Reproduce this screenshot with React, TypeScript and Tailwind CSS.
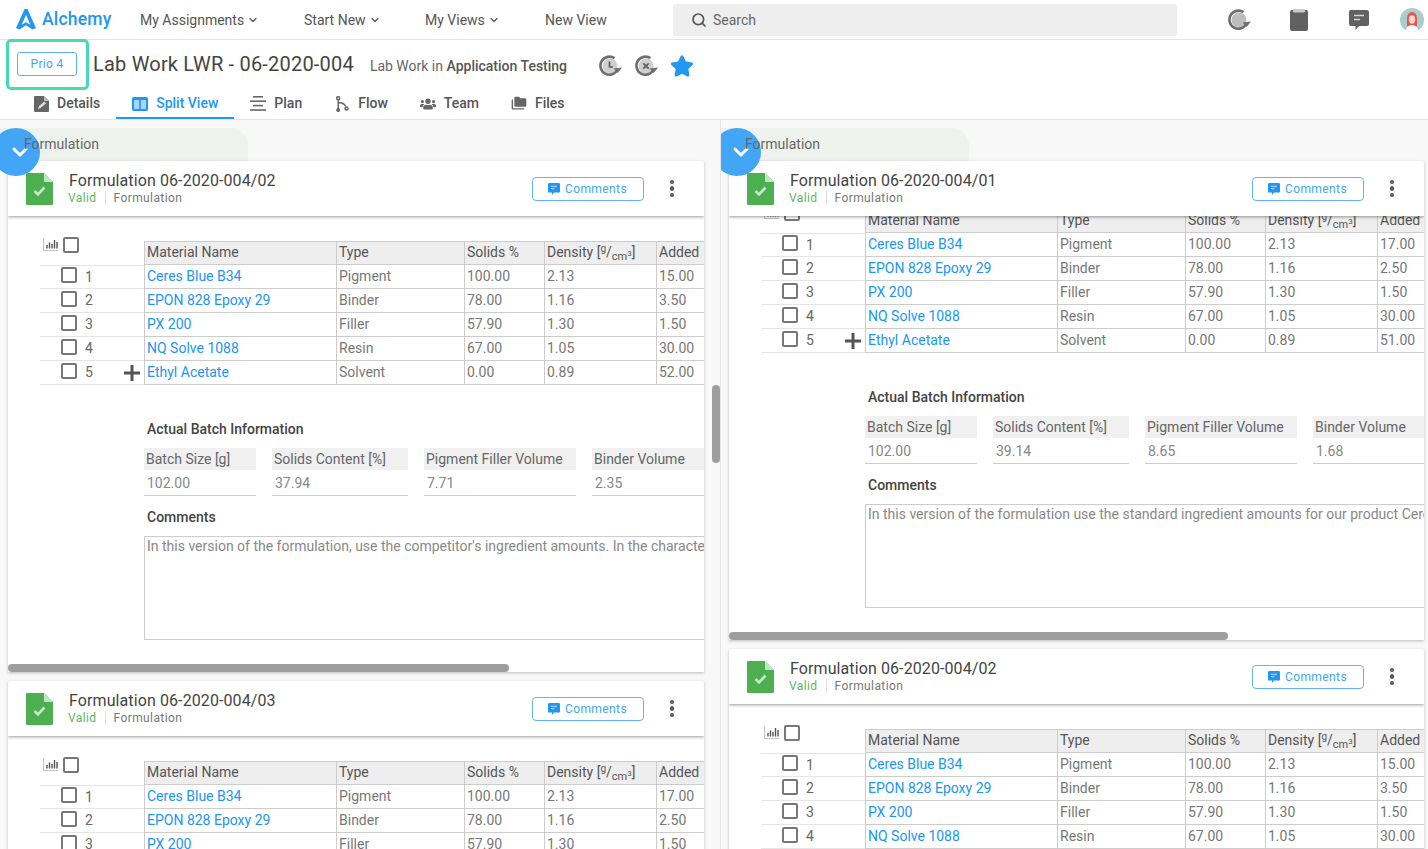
import React from "react";
import { ChevronDown, Search } from "lucide-react";
import { FaUsers, FaStar } from "react-icons/fa";
import { MdFolderCopy } from "react-icons/md";

type Row = [string, string, string, string, string];

const LINK = "text-[#2196f3]";

function Logo() {
  return (
    <svg className="-translate-y-px" width="20" height="21" viewBox="0 0 21 22" fill="#2196f3">
      <path d="M9 0 L12 0 L21 20 L17.5 21.5 L10.5 17 L3.5 21.5 L0 20 Z M10.5 6 L6 16.5 L10.5 14 L15 16.5 Z" fillRule="evenodd" />
    </svg>
  );
}

function HistoryIcon({ kind, size = 24 }: { kind: "clock" | "x" | "none"; size?: number }) {
  return (
    <svg width={size} height={size} viewBox="0 0 24 24">
      <circle cx="11" cy="12" r="7.5" fill={kind === "none" ? "#bdbdbd" : "#cfcfcf"} />
      <path d="M18.6 15.5 A9 9 0 1 1 15.5 4.2" fill="none" stroke="#6e6e6e" strokeWidth="2.6" />
      <path d="M23 13.5 L18.6 19 L14.6 14.6 Z" fill="#6e6e6e" />
      {kind === "clock" && <path d="M10.5 7.5 V13 H14" fill="none" stroke="#5f5f5f" strokeWidth="1.7" />}
      {kind === "x" && <path d="M8.3 9.3 L13.7 14.7 M13.7 9.3 L8.3 14.7" fill="none" stroke="#5f5f5f" strokeWidth="1.7" />}
    </svg>
  );
}

function Clipboard() {
  return (
    <svg width="18" height="22" viewBox="0 0 18 22">
      <rect x="0" y="1" width="18" height="21" rx="2" fill="#616161" />
      <rect x="3" y="0" width="12" height="3.5" rx="1" fill="#c9c9c9" />
    </svg>
  );
}

function Chat({ color = "#616161", size = 20 }: { color?: string; size?: number }) {
  return (
    <svg width={size} height={size} viewBox="0 0 20 20">
      <path d="M2 0 H18 A2 2 0 0 1 20 2 V14 A2 2 0 0 1 18 16 H10 L6.5 20 V16 H2 A2 2 0 0 1 0 14 V2 A2 2 0 0 1 2 0 Z" fill={color} />
      <path d="M5 5.5 H15 M5 9.5 H11" stroke="#fff" strokeOpacity="0.75" strokeWidth="1.5" />
    </svg>
  );
}

function Avatar() {
  return (
    <svg width="24" height="24" viewBox="0 0 24 24">
      <clipPath id="avatar-clip"><circle cx="12" cy="12" r="12" /></clipPath>
      <g clipPath="url(#avatar-clip)">
        <rect width="24" height="24" fill="#a8cfcd" />
        <path d="M7 18 V10 A5 6 0 0 1 17 10 V18 Z" fill="#e8554f" />
        <ellipse cx="12" cy="11.5" rx="3.2" ry="4.2" fill="#f7d3cb" />
        <path d="M5 25 Q6 17 12 17 Q18 17 19 25 Z" fill="#fafafa" />
      </g>
    </svg>
  );
}

function DetailsIcon() {
  return (
    <svg width="15" height="16" viewBox="0 0 15 16">
      <path d="M0 1 A1 1 0 0 1 1 0 H10 L15 5 V15 A1 1 0 0 1 14 16 H1 A1 1 0 0 1 0 15 Z" fill="#666" />
      <path d="M10 0 L15 5 H10 Z" fill="#bbb" />
      <path d="M4 13 L5 10 L10.5 5.5 L12 7.5 L6.5 12 Z" fill="#ddd" />
    </svg>
  );
}

function SplitIcon() {
  return (
    <svg width="16" height="14" viewBox="0 0 16 14">
      <rect width="16" height="14" rx="2" fill="#2196f3" />
      <rect x="2" y="3" width="5.2" height="9" fill="#a8d6fb" />
      <rect x="8.8" y="3" width="5.2" height="9" fill="#a8d6fb" />
    </svg>
  );
}

function PlanIcon() {
  return (
    <svg width="16" height="15" viewBox="0 0 16 15" fill="#666">
      <rect x="3" y="0" width="10" height="1.6" />
      <rect x="0" y="4.4" width="16" height="1.6" />
      <rect x="3" y="8.8" width="10" height="1.6" />
      <rect x="0" y="13.2" width="16" height="1.6" />
    </svg>
  );
}

function FlowIcon() {
  return (
    <svg width="13" height="16" viewBox="0 0 13 16" fill="none" stroke="#666" strokeWidth="1.5">
      <circle cx="2.2" cy="2.2" r="1.5" />
      <path d="M2.2 4 V13 M2.2 6.5 Q8 6.5 9.8 10.5" />
      <circle cx="2.2" cy="14" r="1.3" fill="#666" />
      <circle cx="10.5" cy="12.5" r="1.5" />
    </svg>
  );
}

function Tab({ icon, label, active }: { icon: React.ReactNode; label: string; active?: boolean }) {
  return (
    <div
      className={
        "flex h-[29px] items-center gap-2 px-4 border-b-2 font-medium " +
        (active ? "border-[#2196f3] text-[#2196f3]" : "border-transparent text-[#555]")
      }
    >
      <span className="flex w-4 justify-center">{icon}</span>
      <span>{label}</span>
    </div>
  );
}

function DocIcon() {
  return (
    <svg width="27" height="32" viewBox="0 0 27 32">
      <path d="M1 0 H18 L27 9 V31 A1 1 0 0 1 26 32 H1 A1 1 0 0 1 0 31 V1 A1 1 0 0 1 1 0 Z" fill="#4caf50" />
      <path d="M18 0 L27 9 H18 Z" fill="#c4e4c6" />
      <path d="M8.5 18 L12 21.5 L18.5 14.5" fill="none" stroke="#c9e6cb" strokeWidth="2.6" />
    </svg>
  );
}

function Kebab() {
  return (
    <div className="flex flex-col gap-[2px]">
      <span className="h-[4.5px] w-[4.5px] rounded-full bg-[#555]" />
      <span className="h-[4.5px] w-[4.5px] rounded-full bg-[#555]" />
      <span className="h-[4.5px] w-[4.5px] rounded-full bg-[#555]" />
    </div>
  );
}

function Check() {
  return <span className="block h-[16px] w-[16px] shrink-0 rounded-[2px] border-2 border-[#777] bg-white" />;
}

function ChartIcon() {
  return (
    <svg width="15" height="13" viewBox="0 0 15 13">
      <path d="M0.5 0 V12.5 H15" fill="none" stroke="#c4c4c4" strokeWidth="1.2" />
      <path d="M4 7 V10.5 M6.5 4.5 V10.5 M9 6 V10.5 M11.5 2 V10.5 M14 4 V10.5" stroke="#555" strokeWidth="1.4" />
    </svg>
  );
}

function Cell({ w, children, head }: { w: string; children?: React.ReactNode; head?: boolean }) {
  return (
    <div
      className={
        w +
        " shrink-0 truncate border-l border-[#ccc] pl-[2px] " +
        (head ? "bg-[#eeeeee] leading-[20px] text-[#555]" : "leading-[23px] text-[#777]")
      }
    >
      {children}
    </div>
  );
}

const W = ["w-[192px]", "w-[128px]", "w-[80px]", "w-[112px]", "w-[48px]"];

function MatTable({ rows }: { rows: Row[] }) {
  return (
    <div className="text-[14px]">
      <div className="flex h-[24px]">
        <div className="relative w-[104px] shrink-0">
          <div className="absolute left-[3px] top-[-3px]"><ChartIcon /></div>
          <div className="absolute left-[23px] top-[-4px]"><Check /></div>
        </div>
        <div className="flex border-y border-[#ccc]">
          <Cell w={W[0]} head>Material Name</Cell>
          <Cell w={W[1]} head>Type</Cell>
          <Cell w={W[2]} head>Solids %</Cell>
          <Cell w={W[3]} head>
            Density [<sup className="text-[10px] leading-none">g</sup>/<sub className="text-[11px] leading-none">cm<sup className="text-[8px] leading-none">3</sup></sub>]
          </Cell>
          <Cell w={W[4]} head>Added</Cell>
          <Cell w="w-[120px]" head />
        </div>
      </div>
      {rows.map((r, i) => (
        <div key={i} className="flex h-[24px]">
          <div className={"flex w-[104px] shrink-0 items-center border-b border-[#e6e6e6] pb-[4px] pl-[21px] text-[#666] " + (i === 0 ? "border-t" : "")}>
            <Check />
            <span className="ml-[8px] translate-y-[2px]">{i + 1}</span>
            {i === rows.length - 1 && (
              <svg className="ml-[31px] translate-y-[2px]" width="16" height="16" viewBox="0 0 16 16">
                <path d="M8 0 V16 M0 8 H16" stroke="#555" strokeWidth="3" />
              </svg>
            )}
          </div>
          <div className="flex border-b border-[#ccc]">
            <Cell w={W[0]}><span className={LINK}>{r[0]}</span></Cell>
            <Cell w={W[1]}>{r[1]}</Cell>
            <Cell w={W[2]}>{r[2]}</Cell>
            <Cell w={W[3]}>{r[3]}</Cell>
            <Cell w={W[4]}>{r[4]}</Cell>
            <Cell w="w-[120px]" />
          </div>
        </div>
      ))}
    </div>
  );
}

function Field({ w, label, value }: { w: string; label: string; value: string }) {
  return (
    <div className={w + " shrink-0"}>
      <div className="h-[22px] bg-[#f0f0f0] pl-[2px] leading-[22px] text-[#666]">{label}</div>
      <div className="h-[26px] border-b border-[#ccc] pl-[3px] pt-[2px] leading-[22px] text-[#888]">{value}</div>
    </div>
  );
}

type CardProps = {
  id: string;
  rows: Row[];
  width: string;
  batch?: string[];
  comment?: string;
  shift?: boolean;
  thumb?: string;
};

function Card({ id, rows, width, batch, comment, shift, thumb }: CardProps) {
  return (
    <div className={width + " shrink-0 overflow-hidden rounded-t-[2px] bg-white shadow-[0_1px_3px_rgba(0,0,0,0.25)]"}>
      <div className="relative z-10 flex h-[55px] items-center bg-white pl-[18px] pr-[30px] shadow-[0_1px_3px_rgba(0,0,0,0.4)]">
        <DocIcon />
        <div className="ml-[16px]">
          <div className="text-[16px] leading-[19px] tracking-[0.1px] text-[#444]">{id}</div>
          <div className="-ml-px flex items-center text-[12px] leading-[16px] tracking-[0.4px]">
            <span className="text-[#5cb85f]">Valid</span>
            <span className="mx-[8px] h-[14px] w-px bg-[#ddd]" />
            <span className="text-[#777]">Formulation</span>
          </div>
        </div>
        <div className="ml-auto flex h-[24px] w-[112px] items-center justify-center gap-[5px] rounded-[4px] border border-[#63b4f6] text-[12px] tracking-[0.4px] text-[#42a5f5]">
          <Chat color="#2196f3" size={12} />
          Comments
        </div>
        <div className="ml-[26px]"><Kebab /></div>
      </div>
      <div className="overflow-hidden">
        <div className={"w-[1200px] pl-[32px] " + (shift ? "-mt-[7px]" : "pt-[25px]")}>
          <MatTable rows={rows} />
          {batch && (
            <div className="text-[14px]">
              <div className="ml-[107px] mt-[34px] h-[20px] font-medium leading-[20px] text-[#444]">Actual Batch Information</div>
              <div className="ml-[104px] mt-[9px] flex gap-4">
                <Field w="w-[112px]" label="Batch Size [g]" value={batch[0]} />
                <Field w="w-[136px]" label="Solids Content [%]" value={batch[1]} />
                <Field w="w-[152px]" label="Pigment Filler Volume" value={batch[2]} />
                <Field w="w-[200px]" label="Binder Volume" value={batch[3]} />
              </div>
              <div className="ml-[107px] mt-[11px] h-[20px] font-medium leading-[20px] text-[#444]">Comments</div>
              <div className="ml-[104px] mt-[9px] h-[104px] w-[1000px] border border-[#ccc] pl-[2px] leading-[18px] text-[#888] whitespace-nowrap">
                {comment}
              </div>
            </div>
          )}
        </div>
        {thumb && <div className={thumb + " mt-[24px] h-[8px] rounded-full bg-[#9e9e9e]"} />}
      </div>
    </div>
  );
}

function Section({ children }: { children: React.ReactNode }) {
  return (
    <div className="relative">
      <div className="absolute -left-4 top-0 z-10 flex h-[48px] w-[48px] items-center justify-center rounded-full bg-[#42a5f5] pl-2">
        <ChevronDown className="text-white" size={24} strokeWidth={3} />
      </div>
      <div className="absolute -left-2 top-0 h-[33px] w-[248px] rounded-tr-[18px] bg-[#edf3ec]" />
      <div className="relative z-20 h-[33px] w-[240px] pl-[16px] pt-[6px] text-[14px] leading-[20px] text-[#666]">
        Formulation
      </div>
      <div className="relative z-0">{children}</div>
    </div>
  );
}

const rowsA: Row[] = [
  ["Ceres Blue B34", "Pigment", "100.00", "2.13", "15.00"],
  ["EPON 828 Epoxy 29", "Binder", "78.00", "1.16", "3.50"],
  ["PX 200", "Filler", "57.90", "1.30", "1.50"],
  ["NQ Solve 1088", "Resin", "67.00", "1.05", "30.00"],
  ["Ethyl Acetate", "Solvent", "0.00", "0.89", "52.00"],
];
const rowsB: Row[] = [
  ["Ceres Blue B34", "Pigment", "100.00", "2.13", "17.00"],
  ["EPON 828 Epoxy 29", "Binder", "78.00", "1.16", "2.50"],
  ["PX 200", "Filler", "57.90", "1.30", "1.50"],
  ["NQ Solve 1088", "Resin", "67.00", "1.05", "30.00"],
  ["Ethyl Acetate", "Solvent", "0.00", "0.89", "51.00"],
];

export default function App() {
  return (
    <div className="flex h-[849px] w-[1428px] flex-col overflow-hidden bg-[#f8f8f8] font-['Roboto',sans-serif]">
      <div className="flex h-[40px] shrink-0 items-center border-b border-[#e5e5e5] bg-white pt-[1px] text-[14px] text-[#555]">
        <div className="ml-[16px] flex items-center gap-[6px]">
          <Logo />
          <span className="w-[70px] whitespace-nowrap text-[17.5px] font-medium leading-none tracking-[0.2px] text-[#2196f3]">Alchemy</span>
        </div>
        <div className="ml-[28px] flex w-[164px] items-center gap-[3px]">My Assignments <ChevronDown size={12} strokeWidth={2.5} /></div>
        <div className="flex w-[121px] items-center gap-[3px]">Start New <ChevronDown size={12} strokeWidth={2.5} /></div>
        <div className="flex w-[120px] items-center gap-[3px]">My Views <ChevronDown size={12} strokeWidth={2.5} /></div>
        <div className="w-[128px]">New View</div>
        <div className="flex h-[32px] w-[504px] items-center rounded-[3px] bg-[#eeeeee] pl-[18px] text-[#666]">
          <Search size={16} strokeWidth={2.5} className="text-[#555]" />
          <span className="ml-[6px]">Search</span>
        </div>
        <div className="ml-[51px]"><HistoryIcon kind="none" /></div>
        <div className="ml-[38px]"><Clipboard /></div>
        <div className="ml-[41px]"><Chat /></div>
        <div className="ml-[31px]"><Avatar /></div>
      </div>

      <div className="h-[80px] shrink-0 border-b border-[#e5e5e5] bg-white">
        <div className="flex h-[50px] items-start pl-[6px]">
          <div className="flex h-[51px] w-[83px] -translate-y-px items-center justify-center rounded-[5px] border-[3px] border-[#48d8b6] pb-[1px] pr-[1px]">
            <div className="flex h-[24px] w-[60px] items-center justify-center rounded-[3px] border border-[#5fb1f5] text-[12px] tracking-[0.3px] text-[#42a5f5]">Prio 4</div>
          </div>
          <div className="ml-[4px] mt-[12px] text-[20px] leading-[25px] tracking-[0.2px] text-[#444]">Lab Work LWR - 06-2020-004</div>
          <div className="ml-[16px] mt-[16px] text-[14px] leading-[20px] text-[#666]">
            Lab Work in <span className="font-medium text-[#555]">Application Testing</span>
          </div>
          <div className="ml-[32px] mt-[14px] flex items-center gap-[12px]">
            <HistoryIcon kind="clock" />
            <HistoryIcon kind="x" />
            <FaStar className="-ml-px text-[#2196f3]" size={24} />
          </div>
        </div>
        <div className="flex pl-[17px] text-[14px]">
          <Tab icon={<DetailsIcon />} label="Details" />
          <Tab icon={<SplitIcon />} label="Split View" active />
          <Tab icon={<PlanIcon />} label="Plan" />
          <Tab icon={<FlowIcon />} label="Flow" />
          <Tab icon={<FaUsers className="text-[#666]" size={16} />} label="Team" />
          <Tab icon={<MdFolderCopy className="text-[#666]" size={17} />} label="Files" />
        </div>
      </div>

      <div className="flex min-h-0 flex-1">
        <div className="relative h-full w-[720px] shrink-0 overflow-hidden pl-2 pt-2">
          <Section>
            <Card
              id="Formulation 06-2020-004/02"
              width="w-[696px]"
              rows={rowsA}
              batch={["102.00", "37.94", "7.71", "2.35"]}
              comment="In this version of the formulation, use the competitor's ingredient amounts. In the characterization step, compare the results against our standard product."
              thumb="w-[501px]"
            />
            <div className="h-[9px]" />
            <Card id="Formulation 06-2020-004/03" width="w-[696px]" rows={rowsB} />
          </Section>
          <div className="absolute right-0 top-[265px] h-[78px] w-[8px] rounded-full bg-[#9e9e9e]" />
        </div>
        <div className="h-full min-w-0 flex-1 overflow-hidden border-l border-[#e5e5e5] pl-2 pt-2">
          <Section>
            <Card
              id="Formulation 06-2020-004/01"
              width="w-[695px]"
              rows={rowsB}
              batch={["102.00", "39.14", "8.65", "1.68"]}
              comment="In this version of the formulation use the standard ingredient amounts for our product Ceres Blue in the characterization step."
              shift
              thumb="w-[499px]"
            />
            <div className="h-[9px]" />
            <Card id="Formulation 06-2020-004/02" width="w-[695px]" rows={rowsA} />
          </Section>
        </div>
      </div>
    </div>
  );
}
